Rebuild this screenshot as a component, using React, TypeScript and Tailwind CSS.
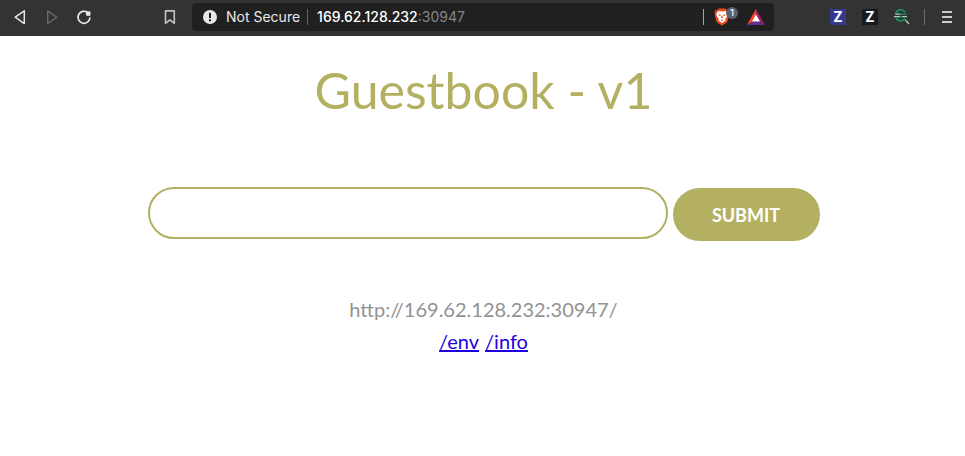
import { useState } from "react";

function BackIcon() {
  return (
    <svg width="12" height="16" viewBox="0 0 12 16" fill="none" stroke="#e4e4e4" strokeWidth="1.5" strokeLinejoin="round">
      <path d="M10.3 1.8v12.8L1.2 8.2z" />
    </svg>
  );
}

function ForwardIcon() {
  return (
    <svg width="12" height="16" viewBox="0 0 12 16" fill="none" stroke="#6a6a6a" strokeWidth="1.4" strokeLinejoin="round">
      <path d="M1.7 1.9v12.6l9-6.3z" />
    </svg>
  );
}

function ReloadIcon() {
  return (
    <svg width="16" height="16" viewBox="0 0 16 16" fill="none">
      <path d="M11.6 3.5A6 6 0 1 0 13.9 9.2" stroke="#e8e8e8" strokeWidth="1.7" strokeLinecap="round" />
      <path d="M10.2 3.2l3.8-.4v3.4l-3.2.2z" fill="#e8e8e8" stroke="#e8e8e8" strokeLinejoin="round" />
    </svg>
  );
}

function BookmarkIcon() {
  return (
    <svg width="12" height="16" viewBox="0 0 12 16" fill="none" stroke="#c4c4c4" strokeWidth="1.6" strokeLinejoin="round">
      <path d="M1.5 1.9h8.8v12.4L5.9 10.9l-4.4 3.4z" />
    </svg>
  );
}

function WarningIcon() {
  return (
    <svg width="14" height="14" viewBox="0 0 14 14">
      <circle cx="7" cy="7" r="7" fill="#e8e8e8" />
      <path d="M6 2.7h2v5.2H6zM6 9.3h2v2H6z" fill="#202020" />
    </svg>
  );
}

function BraveIcon() {
  return (
    <svg width="16" height="18" viewBox="0 0 16 18">
      <path d="M4.6.5h6.8L13 2.2l1.4-.1 1.1 2.2-.5 1.8.2.8-1.8 6.5-1 1.3L8 17.6l-4.4-2.9-1-1.3L.8 6.9l.2-.8-.5-1.8 1.1-2.2 1.4.1z" fill="#f04a1d" />
      <path d="M4.2 2.9 8 3.6l3.8-.7 1.9 2.8-.8 3.1-1.7 2.1.3 1.6L8 15l-3.5-2.5.3-1.6-1.7-2.1-.8-3.1z" fill="#fff" />
      <path d="m4.6 6.2 2 .5-.2 1.3-1.6-.6zM11.4 6.2l-2 .5.2 1.3 1.6-.6zM7.7 7.4h.6l.6 2.6-.9.6-.9-.6zM6.6 12.2l1.4-.6 1.4.6L8 13.1z" fill="#f04a1d" />
    </svg>
  );
}

function RewardsIcon() {
  return (
    <svg width="18" height="16" viewBox="0 0 18 16">
      <path d="M9 0 0 16l6-3.7L9 7z" fill="#ff4724" />
      <path d="m9 0 9 16-6-3.7L9 7z" fill="#9e1f63" />
      <path d="M0 16h18l-6-3.7H6z" fill="#662d91" />
      <path d="m9 5.6 4 6.9H5z" fill="#fff" />
    </svg>
  );
}

function SearchLinesIcon() {
  return (
    <svg width="16" height="16" viewBox="0 0 16 16" fill="none">
      <path d="M1.8 4A5.1 5.1 0 0 1 11 3.4M2 9.3A5.3 5.3 0 0 0 10.8 9.6" stroke="#159467" strokeWidth="1.7" />
      <path d="M6 5.1h6.5M5.5 7.6H8" stroke="#159467" strokeWidth="1.3" />
      <path d="M1.2 5.1h5M0 7.6h6m2 0h5m-2 3 4 4.4" stroke="#a5d5b5" strokeWidth="1.3" />
    </svg>
  );
}

function MenuIcon() {
  return (
    <svg width="10" height="12" viewBox="0 0 10 12" fill="#cbcbcb">
      <path d="M0 0h10v2H0zM0 5h10v2H0zM0 10h10v2H0z" />
    </svg>
  );
}

function BrowserBar() {
  return (
    <header className="flex h-9 items-center bg-[#333333] pb-0.5 font-[Inter,'Liberation_Sans',sans-serif]">
      <nav className="flex w-48 shrink-0 items-center pl-3.5">
        <button type="button" aria-label="Back" className="mr-5"><BackIcon /></button>
        <button type="button" aria-label="Forward" className="mr-4.5" disabled><ForwardIcon /></button>
        <button type="button" aria-label="Reload"><ReloadIcon /></button>
        <button type="button" aria-label="Bookmark" className="mr-4 ml-auto"><BookmarkIcon /></button>
      </nav>
      <div className="flex h-7 min-w-0 flex-1 items-center rounded bg-[#202020] pr-[9px] pl-[11px] text-sm">
        <WarningIcon />
        <span className="mr-[7px] ml-[9px] whitespace-nowrap text-[#e8e8e8]">Not Secure</span>
        <span className="mr-[9px] h-4 w-px bg-[#656565]" />
        <span className="truncate font-medium text-white">
          169.62.128.232<span className="font-normal text-[#858585]">:30947</span>
        </span>
        <span className="mr-2.5 ml-auto h-4 w-px bg-[#a4a4a4]" />
        <button type="button" aria-label="Shields" className="relative mr-[17px]">
          <BraveIcon />
          <span className="absolute -top-px left-3 flex h-3 w-3 items-center justify-center rounded-full bg-[#5d6070] text-[9px] font-medium text-white">1</span>
        </button>
        <button type="button" aria-label="Rewards"><RewardsIcon /></button>
      </div>
      <div className="flex w-[191px] shrink-0 items-center justify-end pr-[13px] text-sm text-white">
        <button type="button" className="mr-4 flex size-4 items-center justify-center bg-[#34398f] font-bold">Z</button>
        <button type="button" className="mr-4 flex size-4 items-center justify-center bg-[#171b22] font-bold">Z</button>
        <button type="button" aria-label="Search extension" className="mr-3.5"><SearchLinesIcon /></button>
        <span className="mr-[17px] h-4 w-px bg-[#6a6a6a]" />
        <button type="button" aria-label="Menu"><MenuIcon /></button>
      </div>
    </header>
  );
}

export default function App() {
  const [entry, setEntry] = useState("");
  return (
    <div className="min-h-screen bg-white font-[Lato,'Open_Sans',sans-serif]">
      <BrowserBar />
      <main className="pl-0.5 text-center">
        <h1 className="pt-[22px] text-[50px] leading-16 font-normal text-[#b4b062]">Guestbook - v1</h1>
        <form
          className="mx-auto mt-[65px] flex w-full max-w-[672px] items-start gap-[5px]"
          onSubmit={(event) => {
            event.preventDefault();
            setEntry("");
          }}
        >
          <input
            type="text"
            aria-label="Guestbook entry"
            value={entry}
            onChange={(event) => setEntry(event.target.value)}
            className="h-[52px] min-w-0 flex-1 rounded-full border-2 border-[#b4b062] px-6 text-xl outline-none"
          />
          <button type="submit" className="mt-px h-[53px] w-[147px] rounded-full bg-[#b4b062] text-lg font-bold text-white">
            SUBMIT
          </button>
        </form>
        <div className="mt-[52px] text-xl leading-8 font-normal text-[#929292]">
          <p>http://169.62.128.232:30947/</p>
          <p className="flex justify-center gap-1.5 text-[#1c00e0]">
            <a href="/env" className="underline">/env</a>
            <a href="/info" className="underline">/info</a>
          </p>
        </div>
      </main>
    </div>
  );
}
